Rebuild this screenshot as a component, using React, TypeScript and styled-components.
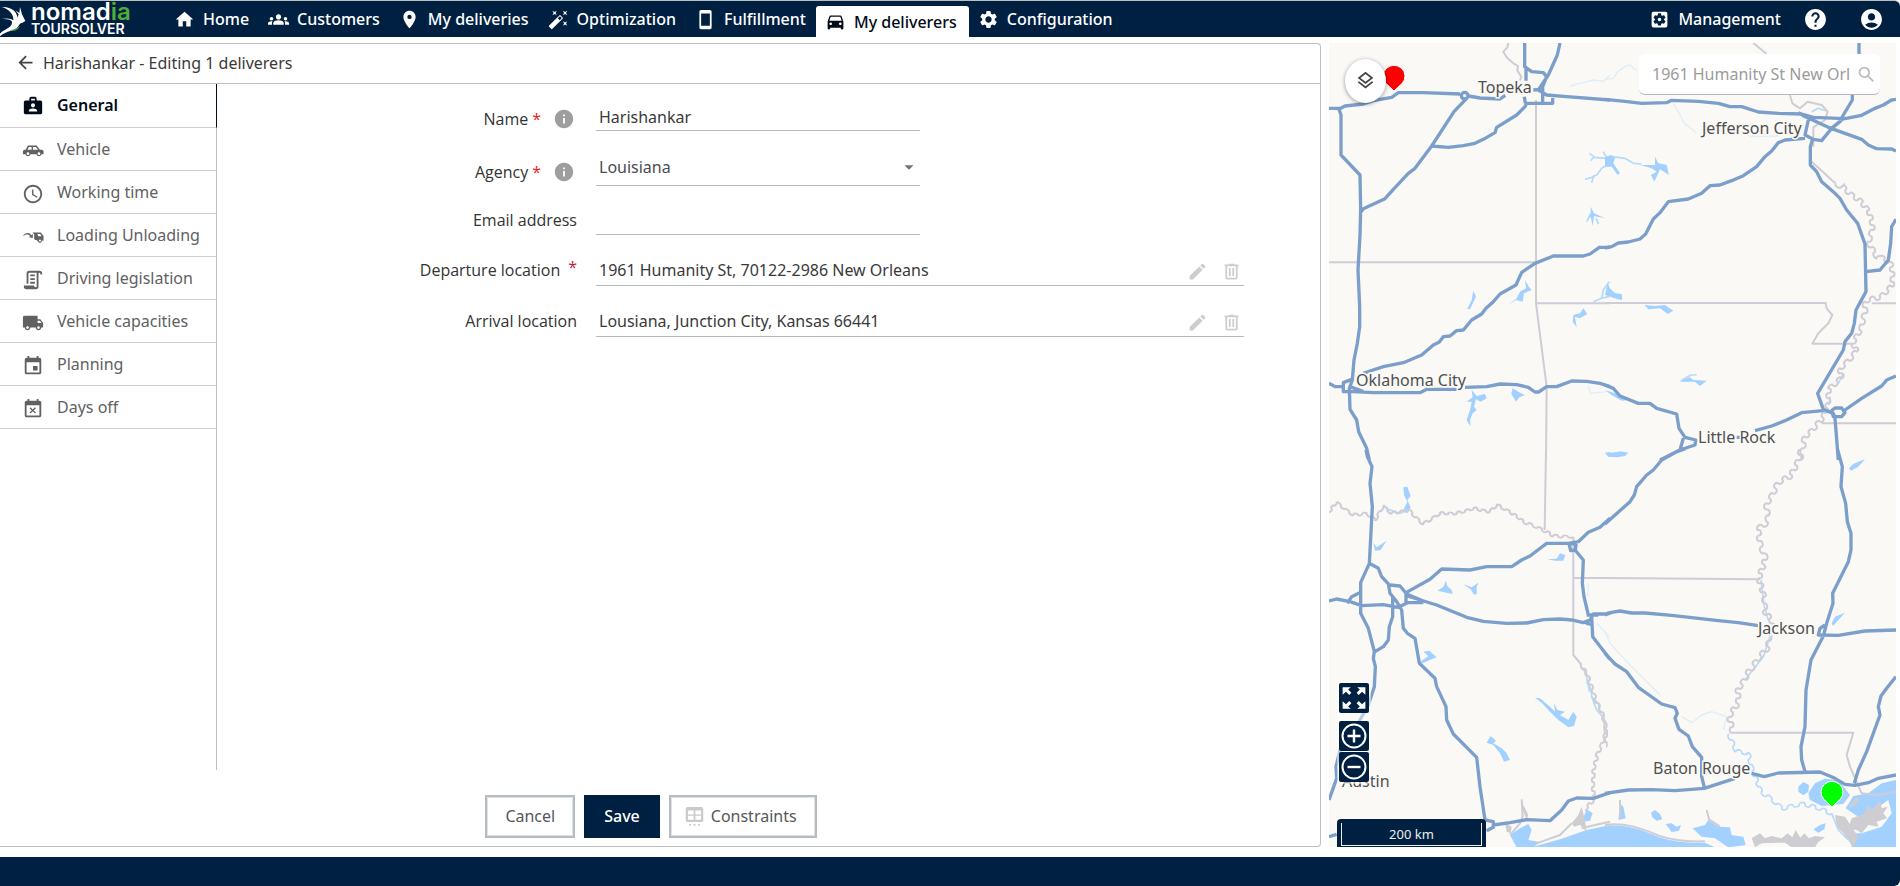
import React from 'react';
import styled, { createGlobalStyle, css } from 'styled-components';
import {
  MdAccessTime,
  MdAccountCircle,
  MdArrowBack,
  MdArrowDropDown,
  MdAutoFixHigh,
  MdDirectionsCar,
  MdEdit,
  MdEvent,
  MdEventBusy,
  MdGroups,
  MdHelp,
  MdHome,
  MdInfo,
  MdLocalShipping,
  MdLocationOn,
  MdOutlineLayers,
  MdSearch,
  MdSettings,
  MdSettingsApplications,
  MdStayCurrentPortrait,
} from 'react-icons/md';

const navy = '#002041';
const line = '#bcbec1';

const GlobalStyle = createGlobalStyle`
  *, *::before, *::after { box-sizing: border-box; }
  body {
    margin: 0;
    background: #fff;
    color: #3a3a3a;
    font-family: "Noto Sans", "Open Sans", sans-serif;
    font-size: 16px;
    line-height: 22px;
  }
  button, input, select { font: inherit; color: inherit; margin: 0; }
  svg { display: block; flex: none; }
`;

const Page = styled.div`
  display: flex;
  flex-direction: column;
  min-height: 100vh;
`;

/* ---------- Header ---------- */

const Header = styled.header`
  display: flex;
  align-items: stretch;
  height: 37px;
  background: ${navy};
  border-top: 1px solid #b9c0bd;
  border-top-right-radius: 6px;
  color: #fff;
`;

const Logo = styled.a`
  display: flex;
  width: 165px;
  color: #fff;
  text-decoration: none;
`;

const LogoText = styled.span`
  display: flex;
  flex-direction: column;
  margin-left: 1px;
  font-family: Inter, sans-serif;
`;

const LogoName = styled.span`
  font-size: 24px;
  line-height: 22px;
  font-weight: 600;

  em {
    font-style: normal;
    color: #4cae3c;
  }
`;

const LogoProduct = styled.span`
  font-size: 14px;
  line-height: 12px;
  font-weight: 600;
`;

const Nav = styled.nav`
  display: flex;
  flex: 1;
`;

const NavLink = styled.a<{ $active?: boolean }>`
  display: flex;
  align-items: center;
  gap: 8px;
  padding: 0 10px 0 9px;
  font-weight: 500;
  color: #fff;
  text-decoration: none;
  white-space: nowrap;

  ${(p) =>
    p.$active &&
    css`
      margin-top: 5px;
      padding-right: 12px;
      border-radius: 3px 3px 0 0;
      background: #fff;
      color: #000b18;
    `}
`;

const HeaderTools = styled.div`
  display: flex;
  align-items: center;
  padding-right: 16px;
`;

const RoundTool = styled.button`
  display: flex;
  margin-left: 12px;
  padding: 0;
  border: 0;
  background: none;
  color: #fff;

  & + & {
    margin-left: 31px;
  }
`;

/* ---------- Main area ---------- */

const Main = styled.main`
  display: grid;
  flex: 1;
  grid-template-columns: minmax(0, 1321fr) minmax(0, 567fr);
  gap: 8px;
  padding: 6px 4px 10px 0;
`;

const Panel = styled.section`
  display: flex;
  flex-direction: column;
  border: 1px solid ${line};
  border-left: 0;
  border-radius: 0 4px 4px 0;
`;

const TitleBar = styled.div`
  display: flex;
  align-items: center;
  gap: 7px;
  height: 40px;
  padding: 0 15px 2px;
  border-bottom: 1px solid ${line};
`;

const BackButton = styled.button`
  display: flex;
  padding: 0;
  border: 0;
  background: none;
  color: #444;
`;

const Title = styled.h1`
  margin: 0;
  font-size: 16px;
  font-weight: 400;
`;

const PanelBody = styled.div`
  display: flex;
  flex: 1;
`;

const Sidebar = styled.nav`
  width: 217px;
  border-right: 1px solid ${line};
`;

const SideLink = styled.a<{ $active?: boolean }>`
  display: flex;
  align-items: center;
  gap: 13px;
  height: 43px;
  margin-right: -1px;
  padding-left: 22px;
  border-right: 1px solid ${(p) => (p.$active ? '#000b18' : line)};
  border-bottom: 1px solid #cfcfd1;
  color: ${(p) => (p.$active ? '#000b18' : '#5f6163')};
  font-weight: ${(p) => (p.$active ? 600 : 400)};
  text-decoration: none;

  &:first-child {
    height: 44px;
    padding-bottom: 2px;
  }

  svg {
    margin-top: 3px;
  }
`;

const Form = styled.form`
  display: flex;
  flex: 1;
  flex-direction: column;
  gap: 21px;
  padding: 17px 76px 0 0;
`;

const Row = styled.div`
  display: grid;
  grid-template-columns: 360px minmax(0, 1fr);
  column-gap: 19px;
  align-items: center;
`;

const Label = styled.label<{ $low?: boolean }>`
  display: flex;
  align-items: center;
  justify-content: flex-end;
  padding: ${(p) => (p.$low ? '6px 0 0' : '0 0 2px')};
  color: #333;
  font-family: "Open Sans", "Noto Sans", sans-serif;

  svg {
    margin: 0 2px 0 12px;
    color: #9e9e9e;
  }
`;

const Required = styled.span<{ $raised?: boolean }>`
  margin-left: ${(p) => (p.$raised ? 8 : 4)}px;
  padding-bottom: ${(p) => (p.$raised ? 6 : 0)}px;
  color: ${(p) => (p.$raised ? '#c2183c' : '#f02020')};
`;

const fieldBox = css`
  width: 50%;
  border: 0;
  border-bottom: 1px solid #b4b9be;
  border-radius: 0;
  background: none;
  outline: 0;
`;

const TextInput = styled.input<{ $height: number }>`
  ${fieldBox}
  height: ${(p) => p.$height}px;
  padding: 2px 3px 0;
`;

const SelectBox = styled.div`
  ${fieldBox}
  display: grid;
  align-items: center;
  height: 34px;
  padding-bottom: 4px;

  select,
  svg {
    grid-area: 1 / 1;
  }

  svg {
    justify-self: end;
    color: #757575;
    pointer-events: none;
  }
`;

const Select = styled.select`
  width: 100%;
  padding: 0 3px;
  border: 0;
  background: none;
  appearance: none;
  color: #4a4c4e;
`;

const LocationBox = styled.div`
  ${fieldBox}
  display: flex;
  align-items: center;
  width: 100%;
  height: 30px;
  padding: 0 2px 2px 0;
`;

const LocationInput = styled.input`
  flex: 1;
  padding: 0 3px;
  border: 0;
  background: none;
  outline: 0;
`;

const IconButton = styled.button`
  display: flex;
  margin-left: 13px;
  padding: 4px 0 0;
  border: 0;
  background: none;
  color: #cdcdcd;
`;

const Actions = styled.div`
  display: flex;
  justify-content: center;
  gap: 9px;
  padding: 25px 18px 8px 0;
`;

const Button = styled.button<{ $primary?: boolean }>`
  display: flex;
  align-items: center;
  gap: 6px;
  height: 43px;
  padding: 0 18px 2px;
  border: 2px solid #b7bcc0;
  background: #fff;
  box-shadow: inset 0 0 0 1px #dfe2e4;
  color: #55585b;

  ${(p) =>
    p.$primary &&
    css`
      border-color: ${navy};
      background: ${navy};
      box-shadow: none;
      color: #fff;
      font-weight: 500;
    `}

  svg {
    margin: 4px 0 0 -5px;
    color: #c9cacb;
  }
`;

/* ---------- Map ---------- */

const MapFrame = styled.section`
  position: relative;
  overflow: hidden;
  background: #faf9f6;
`;

const MapCanvas = styled.svg`
  position: absolute;
  inset: 0;
  width: 100%;
  height: 100%;
`;

const LayersButton = styled.button`
  position: absolute;
  top: 16px;
  left: 16px;
  display: flex;
  align-items: center;
  justify-content: center;
  width: 41px;
  height: 44px;
  padding: 0 0 2px;
  border: 0;
  border-radius: 50%;
  background: #fff;
  box-shadow: 0 1px 4px rgba(0, 0, 0, 0.4);
  color: #444;
`;

const SearchBox = styled.label`
  position: absolute;
  top: 11px;
  right: 16px;
  display: flex;
  align-items: center;
  width: 241px;
  height: 41px;
  padding: 0 3px 0 13px;
  border-bottom: 1px solid #b5b9bd;
  border-radius: 6px;
  background: #fff;
  color: #bdbdbd;
`;

const SearchInput = styled.input`
  flex: 1;
  min-width: 0;
  padding: 0;
  border: 0;
  background: none;
  outline: 0;
  color: #9b9b9b;
`;

const MapControls = styled.div`
  position: absolute;
  left: 8px;
  bottom: 63px;
  display: flex;
  flex-direction: column;
  gap: 1px;
  padding: 2px;
  border-radius: 4px;
  background: rgba(255, 255, 255, 0.5);
`;

const MapButton = styled.button<{ $apart?: boolean }>`
  display: flex;
  align-items: center;
  justify-content: center;
  width: 30px;
  height: 30px;
  margin-bottom: ${(p) => (p.$apart ? 7 : 0)}px;
  padding: 0;
  border: 0;
  border-radius: 2px;
  background: ${navy};
  color: #fff;
`;

const Scale = styled.div`
  position: absolute;
  left: 8px;
  bottom: 0;
  width: 149px;
  height: 28px;
  padding: 4px 4px 1px;
  border-radius: 4px 4px 0 0;
  background: ${navy};
`;

const ScaleBar = styled.div`
  height: 23px;
  border: 1px solid #eee;
  border-top: 0;
  color: #eee;
  font-size: 13px;
  line-height: 22px;
  text-align: center;
`;

const Footer = styled.footer`
  height: 29px;
  background: ${navy};
  border-bottom-right-radius: 6px;
`;

/* ---------- Icons the package lacks ---------- */

const Glyph = ({ d, size = 22 }: { d: string; size?: number }) => (
  <svg width={size} height={size} viewBox="0 0 24 24" fill="currentColor" fillRule="evenodd" aria-hidden="true">
    <path d={d} />
  </svg>
);

const briefcaseAccount =
  'M14 6V4H10V6H14M4 6H8V4A2 2 0 0 1 10 2H14A2 2 0 0 1 16 4V6H20A2 2 0 0 1 22 8V19A2 2 0 0 1 20 21H4C2.89 21 2 20.1 2 19V8C2 6.89 2.89 6 4 6M12 9A2.25 2.25 0 1 0 14.25 11.25A2.25 2.25 0 0 0 12 9M16.5 18V16.88C16.5 15.63 14.5 14.63 12 14.63S7.5 15.63 7.5 16.88V18Z';
const carEstate =
  'M6.5 6H16L19.5 10.5H21.5A2 2 0 0 1 23.5 12.5V15.5H21.3A2.9 2.9 0 0 1 15.7 15.5H9.3A2.9 2.9 0 0 1 3.7 15.5H1V12.5A2 2 0 0 1 3 10.5H4ZM7.5 7.5L6 10.5H10.5V7.5ZM12 7.5V10.5H17.5L15.2 7.5ZM6.5 13.4A1.5 1.5 0 1 0 6.5 16.4A1.5 1.5 0 0 0 6.5 13.4ZM18.5 13.4A1.5 1.5 0 1 0 18.5 16.4A1.5 1.5 0 0 0 18.5 13.4Z';
const loadingTruck =
  'M1 11.2C3 7.2 8 6.4 10.2 10L11.8 8.8V13.2L7.4 12.4L9 11.1C7 8.6 4 8.8 1 11.2ZM11.5 7H20.5L23.5 11V16L21.5 15.8A2 2 0 0 1 17.6 16.8L15.8 15.2A2 2 0 0 1 13.2 13.2L13.4 9.6ZM16.8 8.6L17.8 11.2H21.4L19.8 8.6ZM19.6 14.6A1.1 1.1 0 1 0 19.6 16.8A1.1 1.1 0 0 0 19.6 14.6Z';
const scriptText =
  'M15,20A1,1 0 0,0 16,19V4H8A1,1 0 0,0 7,5V16H5V5A3,3 0 0,1 8,2H19A3,3 0 0,1 22,5V6H20V5A1,1 0 0,0 19,4A1,1 0 0,0 18,5V9L18,19A3,3 0 0,1 15,22H5A3,3 0 0,1 2,19V18H13A2,2 0 0,0 15,20M9,6H14V8H9V6M9,10H14V12H9V10M9,14H14V16H9V14Z';
const trash =
  'M9,3V4H4V6H5V19A2,2 0 0,0 7,21H17A2,2 0 0,0 19,19V6H20V4H15V3H9M7,6H17V19H7V6M9,8V17H11V8H9M13,8V17H15V8H13Z';
const tableDots =
  'M4 0H20A2 2 0 0 1 22 2V15A2 2 0 0 1 20 17H4A2 2 0 0 1 2 15V2A2 2 0 0 1 4 0ZM4.5 4V8.5H11V4ZM13 4V8.5H19.5V4ZM4.5 10V14.5H11V10ZM13 10V14.5H19.5V10ZM6 19.5H8V21.5H6ZM11 19.5H13V21.5H11ZM16 19.5H18V21.5H16Z';
const expand =
  'M1.5 2H9L6.6 4.2L9.6 7.2L7.6 9.2L4.6 6.2L1.5 9ZM22.5 2V9L19.4 6.2L16.4 9.2L14.4 7.2L17.4 4.2L15 2ZM1.5 22V15L4.6 17.8L7.6 14.8L9.6 16.8L6.6 19.8L9 22ZM22.5 22H15L17.4 19.8L14.4 16.8L16.4 14.8L19.4 17.8L22.5 15Z';

const CircleSign = ({ plus }: { plus?: boolean }) => (
  <svg width="26" height="26" viewBox="0 0 26 26" fill="none" stroke="currentColor" strokeWidth="2" aria-hidden="true">
    <circle cx="13" cy="13" r="11.5" />
    <path d={plus ? 'M6.5 13H19.5M13 6.5V19.5' : 'M6.5 13H19.5'} strokeWidth="2.4" />
  </svg>
);

const Bird = () => (
  <svg width="30" height="36" viewBox="0 0 90 108" aria-hidden="true">
    <path
      d="M6 18C32 16 52 32 52 50L56 40L46 28L58 36L60 18L66 40L76 60L66 66C60 66 58 70 55 76C44 92 20 88 0 106V98C12 84 34 82 36 66C37 58 30 54 4 54C24 50 36 54 40 58C42 42 28 24 6 18Z"
      fill="#fff"
    />
    <path d="M28 88C42 86 54 82 60 74C56 86 44 92 28 88Z" fill="#4cae3c" />
  </svg>
);

/* ---------- Map drawing ---------- */

type Point = [number, number];

/* A winding river line through the given points, bending to alternate sides. */
const meander = (points: Point[], step: number, swing: number): string => {
  let d = `M${points[0].join(' ')}`;
  let side = 1;
  for (let i = 1; i < points.length; i++) {
    const [x0, y0] = points[i - 1];
    const [x1, y1] = points[i];
    const length = Math.hypot(x1 - x0, y1 - y0);
    const n = Math.max(1, Math.round(length / step));
    const nx = -(y1 - y0) / length;
    const ny = (x1 - x0) / length;
    for (let k = 1; k <= n; k++) {
      const reach = swing * side * (k % 3 === 0 ? 0.6 : 1);
      const ax = x0 + ((x1 - x0) * (k - 1)) / n;
      const ay = y0 + ((y1 - y0) * (k - 1)) / n;
      const bx = x0 + ((x1 - x0) * k) / n;
      const by = y0 + ((y1 - y0) * k) / n;
      d += `C${[ax + nx * reach, ay + ny * reach, bx + nx * reach, by + ny * reach, bx, by]
        .map((v) => v.toFixed(1))
        .join(' ')}`;
      side = -side;
    }
  }
  return d;
};

interface Quadrant {
  name: string;
  x: number;
  y: number;
  water: string;
  marsh?: string;
  streams: string;
  paleStreams?: string;
  borders: string;
  roads: string;
}

const quadrants: Quadrant[] = [
  {
    name: 'north-west',
    x: -27,
    y: -9,
    water:
      'M812 500L822 520L855 535L822 528L818 558L812 530L800 545L812 520ZM460 752L468 770L450 808L442 806L455 780ZM565 795L590 775L600 755L618 745L615 720L625 738L635 750L612 760L608 785L588 780ZM578 1045L600 1058L615 1065L598 1072L588 1085L574 1062ZM455 1050L470 1068L495 1062L500 1075L482 1085L468 1078L462 1100L470 1110L458 1120L450 1140L452 1160L440 1140L450 1110L455 1085L440 1085L458 1072ZM760 825L780 820L790 805L802 822L780 835L765 830L770 862L758 845Z',
    streams:
      'M808 340L822 350L812 362M822 352L870 356M850 335L858 350M795 418L815 412L830 405L845 385L870 370M815 428L822 405M820 785L845 775L850 750L868 725M840 775L868 770M858 1240L870 1238M800 545L812 520M836 552L828 535',
    paleStreams: 'M750 138L790 128L820 120L850 124L870 105M805 1040L812 1060L860 1055',
    borders:
      'M27 667H650M648 180V790L680 1040L678 1260M648 790H870M565 9L562 22L550 35L560 52L580 70L594 78L592 92L604 110L600 122',
    roads:
      'M27 205L62 205L75 198L130 192L160 182L215 172L235 158H310L420 162M446 168L480 174L540 177L556 166M640 150L664 148M440 175L402 215L335 318L285 385L265 400L220 448L195 476L130 506L120 520M335 318L385 322L430 317L465 310L490 298L525 278L530 262L590 225L615 200L620 190H698V168M614 9V80L635 95L670 98L680 110L668 140V190M720 9L712 45L685 105L665 135L655 150L680 165L740 170L870 180M618 85V122M613 170L616 190M56 205L63 225V345L120 405L122 510L120 585L114 690L119 800V860L112 910L102 960L97 1020L88 1045L90 1108L110 1140L116 1175L140 1225L148 1260M130 1000L150 993L190 980L250 968L305 945L340 915L358 906L370 890L390 888L410 872L430 870L455 840L485 822L498 805L520 785L540 762L588 735L605 697L645 670L700 648H790L810 642L838 622H870M27 1030L45 1040H72M95 1018L70 1028L70 1055L100 1055L160 1058H300L320 1048H415M435 1042L500 1040L540 1032L590 1034L625 1042L645 1056H656L680 1040H710L755 1023L800 1024L840 1030L870 1040M90 1040L130 1055M424 167A10 10 0 1 0 444 167A10 10 0 1 0 424 167',
  },
  {
    name: 'north-east',
    x: 828,
    y: -9,
    water:
      'M0 350L20 345L30 355L25 370L45 400L38 405L20 380L0 380ZM150 350L160 370L185 375L192 405L165 388L148 425L138 405L155 395L140 385L105 375L150 375ZM0 765L8 730L15 745L30 760L50 762L52 780L38 778ZM118 795L150 798L180 795L205 812L188 822L165 805L130 808ZM225 1022L255 1012L265 1020L305 1022L285 1038L270 1025L228 1025ZM0 1050L30 1060L50 1068L70 1080L50 1082L20 1065ZM5 1240L40 1235L60 1245L30 1252Z',
    streams: 'M22 350L60 355L85 370L110 372M230 1020L258 1005L275 1005M620 215L640 205L660 212M720 430L708 442M715 1000L700 1030M675 1070L672 1095',
    paleStreams: 'M0 118L25 115L38 95L60 80L75 75L95 92M205 190L225 225L238 250L275 280M360 282L400 272L440 290L520 288',
    borders:
      'M0 789H662L665 805L682 825L670 850L640 880L622 911H745M445 9L485 42M555 165L562 190L585 205L608 185L650 195L668 215L660 240L625 262V320M620 365L650 392L680 420L692 430M800 790H873M650 1150H873' +
      meander([[692, 430], [710, 440], [760, 478], [792, 510], [803, 570], [790, 605], [815, 655], [840, 655], [862, 680], [860, 740], [825, 770], [780, 785], [780, 820], [765, 870], [745, 911], [755, 935], [705, 985], [710, 1015], [670, 1045], [672, 1090], [645, 1145], [600, 1190], [585, 1260]], 17, 10),
    roads:
      'M0 178L60 184L110 190L185 188L200 181L280 184L340 190L375 200L410 200L460 216L520 220L590 222L625 232L720 236L770 226L810 205L835 195L860 180L873 178M762 9V42M742 165V180L715 225L705 245L680 265L650 302L625 298L600 285L610 240M590 225L670 262L720 280L770 298L790 315L815 326L860 327L873 333M580 218L600 228M0 624L20 620L40 609L70 606L105 597L122 582L145 537L165 518L190 485L250 477L290 460L315 437L345 435L380 422L415 407L455 380L480 350L500 333L520 308L540 300L600 295M622 300L616 320V375L635 395L650 425L690 460L705 475L725 510L758 550L780 612L783 755L753 810L748 850L740 880L720 905L715 930L638 1060L655 1108L685 1120L690 1135L700 1260M783 695L825 690L850 660L857 610L860 560L873 538M450 1172L500 1158L540 1142L590 1118L655 1112M395 1192H410M680 1112L690 1104H710L720 1118L710 1130L685 1130ZM720 1110L770 1075L830 1038L845 1020L873 1008M0 1035L25 1045L45 1068L100 1090L135 1090L155 1105L215 1122L222 1165L240 1192L272 1200L270 1215L225 1230L235 1195M225 1230L165 1260M715 236L683 262',
  },
  {
    name: 'south-west',
    x: -27,
    y: 1221,
    water:
      'M640 1190L720 1168L800 1140L870 1125V1192H640ZM570 1155L600 1135L625 1122L635 1140L625 1170L660 1176L640 1192H590ZM785 1115L800 1078L818 1090L810 1112ZM645 743L660 745L690 770L705 785L702 758L712 780L735 785L720 795L745 810L760 785L770 800L762 828L745 832L715 810L690 785L665 758ZM500 878L512 858L528 872L520 880L545 895L560 910L570 930L552 935L540 910L520 885ZM352 422L370 410L378 392L382 408L395 420L398 432L380 428ZM428 402L455 412L475 398L470 412V432L462 434L452 418ZM682 328L710 326L720 310L736 315L730 332L705 332ZM300 635L325 618L310 605L328 602L350 622L330 630L308 640ZM160 278L170 292L200 272L182 300L165 302ZM250 112L262 110L272 138L262 150L272 172L262 190L250 180L262 155L252 135Z',
    marsh: 'M555 1118L575 1130L572 1150L560 1145ZM755 1120L775 1095L785 1070L795 1110L800 1145L780 1125L762 1130ZM605 1048L610 1065L625 1095L620 1110L608 1080Z',
    streams: 'M782 648L800 672L802 700L812 715L815 740L835 760L842 795M802 690L808 725M815 740L830 780L848 800M205 178L240 190L262 180M190 165L205 180M858 8L870 20',
    paleStreams: 'M805 400L803 440M830 520L868 560',
    borders:
      'M678 0L674 240M760 260V615L785 645M760 384H870M570 1155L600 1120L608 1100L605 1048M650 1180L720 1155L755 1120M785 1135L825 1125L870 1115' +
      meander([[27, 185], [50, 158], [100, 195], [140, 190], [165, 210], [190, 170], [215, 190], [265, 180], [310, 222], [360, 190], [410, 190], [460, 175], [510, 185], [530, 165], [570, 185], [610, 215], [680, 245], [700, 258], [758, 260]], 14, 5) +
      meander([[785, 645], [808, 690], [825, 745], [850, 800], [858, 850], [830, 920], [820, 970], [820, 1050], [795, 1080]], 14, 6),
    roads:
      'M138 0L142 20L156 50L150 100L157 170L148 340L122 398V490L145 535L163 605L160 625L166 650L163 710L145 765L120 810L60 900L48 950L50 985L27 1050M148 340L175 355L185 380L205 402L210 430L230 455L245 480L250 535L262 550L285 565L298 640L345 685L350 710L378 770L380 810L400 852L470 922L480 1010L495 1110L520 1115V1132L500 1142M27 453L50 447L90 455L125 467L190 464L235 472L262 458H310M310 453L260 432L240 408L210 405M82 460L95 440L122 427M258 430V458M218 440V500L208 530L205 570L190 590L165 605M258 428L330 388L365 357L450 360L500 350L575 350L605 330L630 318L680 280H745L775 275L805 247L840 232L870 205M262 438L350 465L440 502L490 514L560 520L620 519L670 509L720 507L755 510L790 518L810 510L820 492H855L870 488M748 285L758 280L768 285L766 300L752 302ZM765 300L790 330L787 400L792 440L805 495M800 495H835M798 520L812 522M815 500L818 560L870 628M520 1125L570 1118L620 1109L690 1112L725 1080L745 1053L770 1044L820 1045L870 1028M27 1160L50 1153',
  },
  {
    name: 'south-east',
    x: 828,
    y: 1221,
    water:
      'M0 1128C60 1122 100 1135 160 1160C200 1175 260 1180 300 1178L330 1192H0ZM262 1135L300 1125L310 1110L340 1130L375 1132L380 1155L415 1160L422 1185L370 1192L330 1165L290 1160ZM40 1110L45 1060L55 1070L62 1105ZM138 1088L150 1080L165 1092L172 1108L155 1112L142 1102ZM182 1122L200 1120L215 1130L228 1125L222 1142L200 1146ZM580 1010L595 996L612 1005L610 1025L595 1036L580 1025ZM610 1030L630 1000L660 986L700 990L735 1035L715 1062L650 1068L615 1050ZM625 1138L645 1125L662 1120L658 1138L640 1148ZM680 520L690 500L720 488L700 510L684 528ZM732 55L745 42L780 27L760 50L738 62ZM873 990L830 1000L790 1030L745 1038L722 1075L760 1100L800 1085L850 1050L860 1090L830 1130L770 1150L735 1150L740 1192H873ZM0 8L25 14L45 4L70 8L60 18L35 22L10 20Z',
    marsh:
      'M440 1165L465 1150L480 1165L500 1158L530 1165L548 1150L562 1162L572 1140L586 1163L598 1150L612 1165L630 1158L660 1162L640 1176L630 1192H560L540 1178L470 1180L450 1192ZM740 1105L775 1092L790 1065L800 1080L825 1052L830 1075L848 1070L835 1090L846 1105L815 1115L820 1130L790 1125L770 1150L755 1140L730 1135ZM690 1095L720 1100L740 1130L760 1160L745 1192L715 1150L695 1130ZM730 1070L755 1040L765 1050L745 1070Z',
    streams:
      meander([[372, 852], [392, 905], [428, 908], [450, 980], [470, 1025], [530, 1075], [600, 1062], [680, 1090]], 18, 8) +
      'M680 1090L700 1140L730 1170M468 390L478 470L490 510M495 560L475 620L420 690',
    paleStreams: 'M0 545L15 580L70 640L120 690L165 735M230 800L260 818L290 795L320 785L365 800L355 840',
    borders:
      'M0 384L465 388M375 848H745L725 915L735 950L770 1030L820 1035L873 1025M0 1124C60 1118 100 1131 160 1156C200 1171 260 1176 300 1174M45 1050V1105M305 1080L312 1108L345 1130' +
      meander([[590, 0], [560, 75], [520, 100], [485, 160], [487, 215], [458, 240], [470, 290], [482, 330], [463, 370], [465, 400], [480, 440], [478, 480], [502, 520], [490, 590], [435, 660], [400, 715], [397, 760], [375, 800], [380, 848]], 17, 11) +
      meander([[0, 805], [3, 890]], 14, 6),
    roads:
      'M0 222L75 155L88 135L95 110L125 75L145 60L170 30L215 5L240 -3M0 495L20 487L45 483L80 489L120 489L200 496L340 512L400 518L460 527M698 0L712 50L708 110L722 160L727 215L738 250V300L730 335L683 430L684 460L665 520L655 558L618 630L603 720L600 830L588 890L590 930L600 965M660 525L645 535L640 555L700 556L780 543L873 540M0 610L30 642L65 665L100 712L170 762L210 773L217 790L210 805L222 838L250 858L262 890L290 922L290 980L298 1012M0 1030L70 1020L140 1019L210 1022L298 1015L390 985M440 970L478 980L520 969L645 966L690 985L720 1003L750 1006L790 998L820 985L873 975M748 1000L760 960L785 905L825 795L820 770L828 738L845 715L873 680',
  },
];

const places = [
  { name: 'Topeka', x: 149, y: 50 },
  { name: 'Jefferson City', x: 373, y: 91 },
  { name: 'Oklahoma City', x: 27, y: 343 },
  { name: 'Little Rock', x: 369, y: 400 },
  { name: 'Jackson', x: 429, y: 591 },
  { name: 'Baton Rouge', x: 324, y: 731 },
  { name: 'Austin', x: 13, y: 744 },
];

const Pin = ({ x, y, fill }: { x: number; y: number; fill: string }) => (
  <path
    transform={`translate(${x} ${y})`}
    d="M0 0L-8.5 -8A11 10.8 0 1 1 8.5 -8Z"
    fill={fill}
    stroke="#fff"
    strokeWidth="1"
  />
);

const MapDrawing = () => (
  <MapCanvas viewBox="0 0 567 804" preserveAspectRatio="xMidYMid slice" role="img" aria-label="Map">
    <g transform="scale(0.33333)" fill="none" strokeLinejoin="round">
      {quadrants.map((q) => (
        <g key={q.name} transform={`translate(${q.x} ${q.y})`}>
          <path d={q.water} fill="#a3d1ff" />
          {q.marsh && <path d={q.marsh} fill="#cecdd1" />}
          {q.paleStreams && <path d={q.paleStreams} stroke="#dfeef8" strokeWidth="4" />}
          <path d={q.streams} stroke="#b5dafb" strokeWidth="5" />
          <path d={q.borders} stroke="#d0ccd5" strokeWidth="6" />
        </g>
      ))}
      {quadrants.map((q) => (
        <path
          key={q.name}
          transform={`translate(${q.x} ${q.y})`}
          d={q.roads}
          stroke="#7b9fca"
          strokeWidth="10"
        />
      ))}
    </g>
    <g
      fontFamily='"Noto Sans", "Open Sans", sans-serif'
      fontSize="16"
      fill="#505050"
      stroke="#faf9f6"
      strokeWidth="3"
      paintOrder="stroke"
    >
      {places.map((p) => (
        <text key={p.name} x={p.x} y={p.y}>
          {p.name}
        </text>
      ))}
    </g>
    <Pin x={65} y={48} fill="#f00" />
    <Pin x={503} y={764} fill="#0f0" />
  </MapCanvas>
);

/* ---------- Content ---------- */

const navItems = [
  { label: 'Home', icon: <MdHome size={21} /> },
  { label: 'Customers', icon: <MdGroups size={21} /> },
  { label: 'My deliveries', icon: <MdLocationOn size={21} /> },
  { label: 'Optimization', icon: <MdAutoFixHigh size={21} /> },
  { label: 'Fulfillment', icon: <MdStayCurrentPortrait size={21} /> },
  { label: 'My deliverers', icon: <MdDirectionsCar size={21} />, active: true },
  { label: 'Configuration', icon: <MdSettings size={21} /> },
];

const sections = [
  { label: 'General', icon: <Glyph d={briefcaseAccount} />, active: true },
  { label: 'Vehicle', icon: <Glyph d={carEstate} /> },
  { label: 'Working time', icon: <MdAccessTime size={22} /> },
  { label: 'Loading Unloading', icon: <Glyph d={loadingTruck} /> },
  { label: 'Driving legislation', icon: <Glyph d={scriptText} /> },
  { label: 'Vehicle capacities', icon: <MdLocalShipping size={22} /> },
  { label: 'Planning', icon: <MdEvent size={22} /> },
  { label: 'Days off', icon: <MdEventBusy size={22} /> },
];

const LocationField = ({ id, value }: { id: string; value: string }) => (
  <LocationBox>
    <LocationInput id={id} defaultValue={value} />
    <IconButton type="button" aria-label="Edit location">
      <MdEdit size={21} />
    </IconButton>
    <IconButton type="button" aria-label="Delete location">
      <Glyph d={trash} size={21} />
    </IconButton>
  </LocationBox>
);

export default function App() {
  return (
    <Page>
      <GlobalStyle />
      <Header>
        <Logo href="#home">
          <Bird />
          <LogoText>
            <LogoName>
              nomad<em>ia</em>
            </LogoName>
            <LogoProduct>TOURSOLVER</LogoProduct>
          </LogoText>
        </Logo>
        <Nav>
          {navItems.map((item) => (
            <NavLink key={item.label} href="#" $active={item.active}>
              {item.icon}
              {item.label}
            </NavLink>
          ))}
        </Nav>
        <HeaderTools>
          <NavLink href="#">
            <MdSettingsApplications size={21} />
            Management
          </NavLink>
          <RoundTool type="button" aria-label="Help">
            <MdHelp size={25} />
          </RoundTool>
          <RoundTool type="button" aria-label="Account">
            <MdAccountCircle size={25} />
          </RoundTool>
        </HeaderTools>
      </Header>

      <Main>
        <Panel>
          <TitleBar>
            <BackButton type="button" aria-label="Back">
              <MdArrowBack size={21} />
            </BackButton>
            <Title>Harishankar - Editing 1 deliverers</Title>
          </TitleBar>
          <PanelBody>
            <Sidebar>
              {sections.map((s) => (
                <SideLink key={s.label} href="#" $active={s.active}>
                  {s.icon}
                  {s.label}
                </SideLink>
              ))}
            </Sidebar>
            <Form id="deliverer">
              <Row>
                <Label htmlFor="name" $low>
                  Name<Required>*</Required>
                  <MdInfo size={22} />
                </Label>
                <TextInput id="name" $height={30} defaultValue="Harishankar" />
              </Row>
              <Row>
                <Label htmlFor="agency" $low>
                  Agency<Required>*</Required>
                  <MdInfo size={22} />
                </Label>
                <SelectBox>
                  <Select id="agency" defaultValue="Louisiana">
                    <option>Louisiana</option>
                  </Select>
                  <MdArrowDropDown size={22} />
                </SelectBox>
              </Row>
              <Row>
                <Label htmlFor="email">Email address</Label>
                <TextInput id="email" type="email" $height={28} />
              </Row>
              <Row>
                <Label htmlFor="departure">
                  Departure location<Required $raised>*</Required>
                </Label>
                <LocationField id="departure" value="1961 Humanity St, 70122-2986 New Orleans" />
              </Row>
              <Row>
                <Label htmlFor="arrival">Arrival location</Label>
                <LocationField id="arrival" value="Lousiana, Junction City, Kansas 66441" />
              </Row>
            </Form>
          </PanelBody>
          <Actions>
            <Button type="button">Cancel</Button>
            <Button type="submit" form="deliverer" $primary>
              Save
            </Button>
            <Button type="button">
              <Glyph d={tableDots} size={21} />
              Constraints
            </Button>
          </Actions>
        </Panel>

        <MapFrame>
          <MapDrawing />
          <LayersButton type="button" aria-label="Map layers">
            <MdOutlineLayers size={21} />
          </LayersButton>
          <SearchBox>
            <SearchInput aria-label="Search an address" defaultValue="1961 Humanity St New Orl" />
            <MdSearch size={21} />
          </SearchBox>
          <MapControls>
            <MapButton type="button" aria-label="Full screen" $apart>
              <Glyph d={expand} size={26} />
            </MapButton>
            <MapButton type="button" aria-label="Zoom in">
              <CircleSign plus />
            </MapButton>
            <MapButton type="button" aria-label="Zoom out">
              <CircleSign />
            </MapButton>
          </MapControls>
          <Scale>
            <ScaleBar>200 km</ScaleBar>
          </Scale>
        </MapFrame>
      </Main>
      <Footer />
    </Page>
  );
}
